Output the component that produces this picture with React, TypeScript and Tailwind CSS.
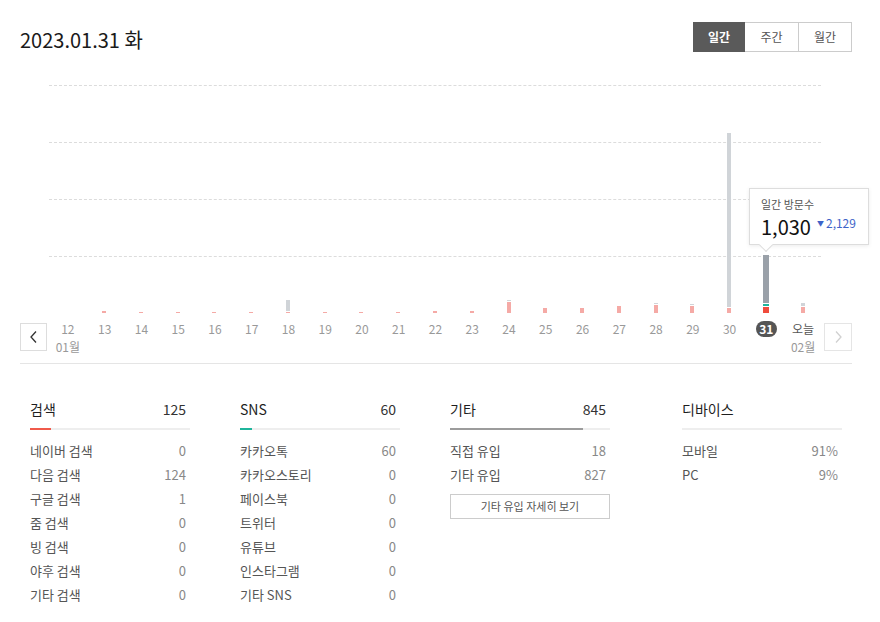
import React from "react";

type Seg = { h: number; c: string };

const PINK = "bg-[#f5aaa6]";
const LGRAY = "bg-[#d0d4d8]";

const columns: { label: string; month?: string; segs: Seg[]; selected?: boolean }[] = [
  { label: "12", month: "01월", segs: [] },
  { label: "13", segs: [{ h: 2, c: PINK }] },
  { label: "14", segs: [{ h: 1, c: PINK }] },
  { label: "15", segs: [{ h: 1, c: PINK }] },
  { label: "16", segs: [{ h: 1, c: PINK }] },
  { label: "17", segs: [{ h: 1, c: PINK }] },
  { label: "18", segs: [{ h: 11, c: LGRAY }, { h: 1, c: PINK }] },
  { label: "19", segs: [{ h: 1, c: PINK }] },
  { label: "20", segs: [{ h: 1, c: PINK }] },
  { label: "21", segs: [{ h: 1, c: PINK }] },
  { label: "22", segs: [{ h: 2, c: PINK }] },
  { label: "23", segs: [{ h: 2, c: PINK }] },
  { label: "24", segs: [{ h: 1, c: LGRAY }, { h: 11, c: PINK }] },
  { label: "25", segs: [{ h: 5, c: PINK }] },
  { label: "26", segs: [{ h: 5, c: PINK }] },
  { label: "27", segs: [{ h: 7, c: PINK }] },
  { label: "28", segs: [{ h: 1, c: LGRAY }, { h: 8, c: PINK }] },
  { label: "29", segs: [{ h: 1, c: LGRAY }, { h: 7, c: PINK }] },
  { label: "30", segs: [{ h: 174, c: LGRAY }, { h: 5, c: PINK }] },
  {
    label: "31",
    selected: true,
    segs: [
      { h: 48, c: "bg-[#9aa1a9]" },
      { h: 2, c: "bg-[#1fb59c]" },
      { h: 6, c: "bg-[#f04b3c]" },
    ],
  },
  { label: "오늘", month: "02월", segs: [{ h: 3, c: LGRAY }, { h: 6, c: PINK }] },
];

const FONT = "font-['Noto_Sans_CJK_KR',_'Noto_Sans',_sans-serif]";

function Chevron({ dir, color }: { dir: "left" | "right"; color: string }) {
  return (
    <svg width="10" height="14" viewBox="0 0 10 14" fill="none">
      {dir === "left" ? (
        <polyline points="7,1.5 2,7 7,12.5" stroke={color} strokeWidth="1.3" />
      ) : (
        <polyline points="3,1.5 8,7 3,12.5" stroke={color} strokeWidth="1.3" />
      )}
    </svg>
  );
}

function StatColumn({
  title,
  total,
  rows,
  barColor,
  barWidth,
  children,
}: {
  title: string;
  total?: string;
  rows: [string, string][];
  barColor?: string;
  barWidth?: number;
  children?: React.ReactNode;
}) {
  return (
    <div className="w-[160px]">
      <div className="flex justify-between items-center h-[24px] leading-[24px]">
        <span className="text-[14px] font-normal text-[#1e1e1e]">{title}</span>
        {total && <span className="text-[14px] font-normal text-[#333] pr-[4px]">{total}</span>}
      </div>
      <div className="mt-[7px] h-[2px] bg-[#eeeeee] flex">
        {barColor && <div className={`h-[2px] ${barColor}`} style={{ width: barWidth }} />}
      </div>
      <div className="mt-[9px]">
        {rows.map(([k, v]) => (
          <div key={k} className="flex justify-between h-[24px] leading-[24px] text-[13px]">
            <span className="text-[#555]">{k}</span>
            <span className="text-[#888] pr-[4px]">{v}</span>
          </div>
        ))}
      </div>
      {children}
    </div>
  );
}

export default function App() {
  return (
    <div className={`w-[880px] h-[622px] bg-white ${FONT} overflow-hidden`}>
      <div className="ml-[20px] w-[832px]">
        {/* header */}
        <div className="flex justify-between items-start pt-[22px] h-[52px]">
          <h1 className="mt-[5px] text-[20px] leading-[26px] text-[#1a1a1a] font-normal">2023.01.31 화</h1>
          <div className="flex h-[30px]">
            <button className="w-[52px] h-[30px] bg-[#5a5a5a] border border-[#5a5a5a] text-white text-[12px] font-bold">
              일간
            </button>
            <button className="w-[54px] h-[30px] border-y border-r border-[#cccccc] text-[#555] text-[12px]">
              주간
            </button>
            <button className="w-[53px] h-[30px] border-y border-r border-[#cccccc] text-[#555] text-[12px]">
              월간
            </button>
          </div>
        </div>

        {/* chart */}
        <div className="mt-[33px] ml-[29px] w-[772px] relative">
          <div className="flex flex-col">
            <div className="h-[57px] border-t border-dashed border-[#dcdcdc]" />
            <div className="h-[57px] border-t border-dashed border-[#dcdcdc]" />
            <div className="h-[57px] border-t border-dashed border-[#dcdcdc]" />
            <div className="h-[57px] border-t border-dashed border-[#dcdcdc]" />
          </div>
          <div className="absolute inset-0 grid grid-cols-[repeat(21,minmax(0,1fr))]">
            {columns.map((col) => (
              <div key={col.label} className="flex flex-col justify-end items-center gap-[1px]">
                {col.segs.map((s, i) => (
                  <div
                    key={i}
                    className={`${s.c} ${col.selected ? "w-[6px]" : "w-[4px]"}`}
                    style={{ height: s.h }}
                  />
                ))}
              </div>
            ))}
          </div>
          {/* tooltip */}
          <div className="absolute left-[700px] top-[103px] w-[120px] h-[57px] bg-white border border-[#dddddd] shadow-[0_1px_4px_rgba(0,0,0,0.08)] px-[11px] pt-[7px]">
            <div className="text-[11px] leading-[16px] text-[#555]">일간 방문수</div>
            <div className="flex items-start">
              <span className="text-[20px] leading-[30px] text-[#111]">1,030</span>
              <span className="ml-[6px] mt-[3px] text-[12px] leading-[16px] text-[#3e63c8] flex items-center">
                <span className="text-[7px] mr-[2px]">▼</span>2,129
              </span>
            </div>
            <div className="absolute left-[11px] -bottom-[6px] w-[10px] h-[10px] bg-white border-r border-b border-[#dddddd] rotate-45" />
          </div>
        </div>

        {/* labels row */}
        <div className="flex items-start mt-[8px]">
          <button className="mt-[2px] w-[27px] h-[28px] border border-[#dddddd] flex items-center justify-center">
            <Chevron dir="left" color="#333" />
          </button>
          <div className="ml-[2.5px] w-[772px] grid grid-cols-[repeat(21,minmax(0,1fr))]">
            {columns.map((col) => (
              <div key={col.label} className="flex flex-col items-center">
                {col.selected ? (
                  <span className="w-[21px] h-[16px] rounded-full bg-[#555] text-white text-[12px] leading-[16px] font-bold text-center">
                    {col.label}
                  </span>
                ) : (
                  <span
                    className={`text-[12px] leading-[16px] ${col.label === "오늘" ? "text-[#555]" : "text-[#999]"}`}
                  >
                    {col.label}
                  </span>
                )}
                {col.month && (
                  <span className="mt-[2px] text-[12px] leading-[16px] text-[#999]">{col.month}</span>
                )}
              </div>
            ))}
          </div>
          <button className="ml-[2.5px] mt-[2px] w-[28px] h-[28px] border border-[#e5e5e5] flex items-center justify-center">
            <Chevron dir="right" color="#d0d0d0" />
          </button>
        </div>

        <div className="mt-[8px] h-px bg-[#e5e5e5]" />

        {/* stats */}
        <div className="flex pt-[33px] pl-[10px]">
          <StatColumn
            title="검색"
            total="125"
            barColor="bg-[#f05a4b]"
            barWidth={21}
            rows={[
              ["네이버 검색", "0"],
              ["다음 검색", "124"],
              ["구글 검색", "1"],
              ["줌 검색", "0"],
              ["빙 검색", "0"],
              ["야후 검색", "0"],
              ["기타 검색", "0"],
            ]}
          />
          <div className="ml-[50px]">
            <StatColumn
              title="SNS"
              total="60"
              barColor="bg-[#1fb59c]"
              barWidth={12}
              rows={[
                ["카카오톡", "60"],
                ["카카오스토리", "0"],
                ["페이스북", "0"],
                ["트위터", "0"],
                ["유튜브", "0"],
                ["인스타그램", "0"],
                ["기타 SNS", "0"],
              ]}
            />
          </div>
          <div className="ml-[50px]">
            <StatColumn
              title="기타"
              total="845"
              barColor="bg-[#9c9c9c]"
              barWidth={133}
              rows={[
                ["직접 유입", "18"],
                ["기타 유입", "827"],
              ]}
            >
              <button className="mt-[7px] w-[160px] h-[25px] border border-[#cccccc] text-[11px] text-[#555]">
                기타 유입 자세히 보기
              </button>
            </StatColumn>
          </div>
          <div className="ml-[72px]">
            <StatColumn
              title="디바이스"
              rows={[
                ["모바일", "91%"],
                ["PC", "9%"],
              ]}
            />
          </div>
        </div>
      </div>
    </div>
  );
}
